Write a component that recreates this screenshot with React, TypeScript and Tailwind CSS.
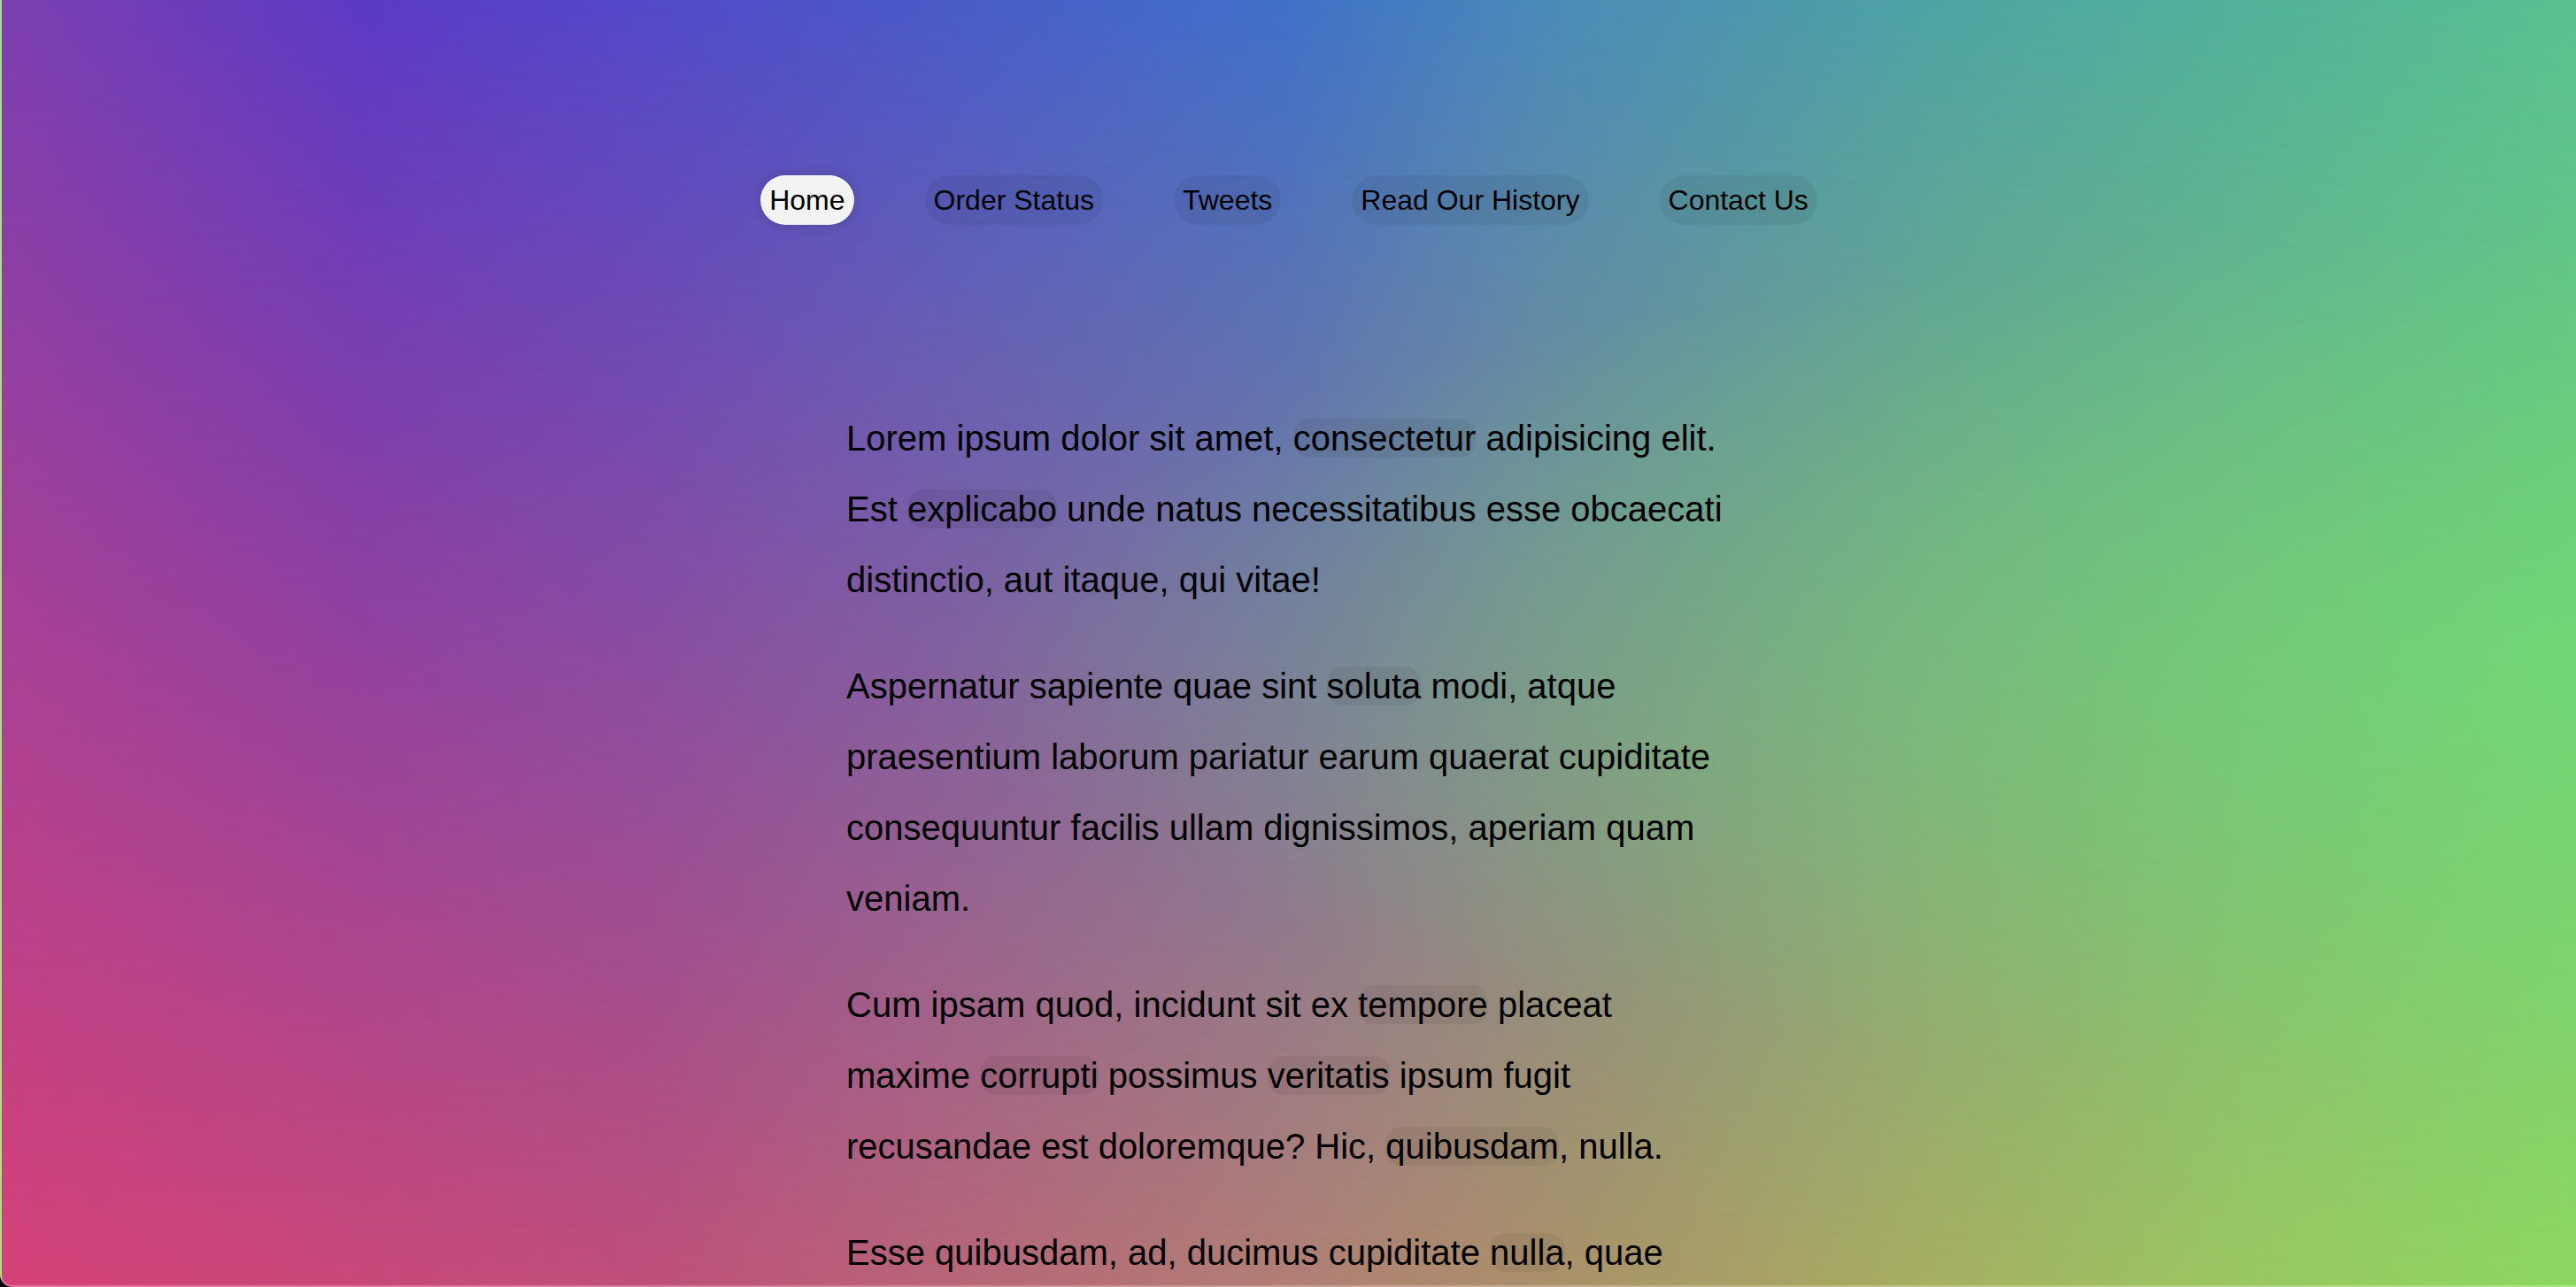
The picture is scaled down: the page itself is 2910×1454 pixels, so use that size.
import React from "react";

const links = ["Home", "Order Status", "Tweets", "Read Our History", "Contact Us"];

// a word with the soft pill behind it
function Hl({ children }: { children: React.ReactNode }) {
  return <span className="rounded-[18px] bg-black/[0.055]">{children}</span>;
}

export default function App() {
  return (
    <div className="h-[1454px] w-[2910px] overflow-hidden bg-black">
      <div className="grid h-full w-full overflow-hidden rounded-bl-[14px] border-b-2 border-l-2 border-white/25 bg-[linear-gradient(to_right,#d84277_0%,#c25078_25%,#b57f72_50%,#ad9566_62%,#a9b060_75%,#9cc860_87%,#8ed860_100%)] font-['Liberation_Sans',Arial,sans-serif] text-black">
        {/* top colours, fading out towards the bottom */}
        <div className="col-start-1 row-start-1 bg-[linear-gradient(to_right,#7b3fb0_0%,#5a3ac4_14%,#5249c8_25%,#3f70c8_50%,#4a8ab8_60%,#4da3a3_75%,#58c090_100%)] [mask-image:linear-gradient(to_bottom,black_0%,transparent_100%)]" />

        <div className="relative col-start-1 row-start-1 bg-[radial-gradient(ellipse_at_100%_50%,rgba(110,226,112,0.45)_0%,transparent_45%)] pt-[198px]">
          <nav className="flex justify-center gap-[80px]">
            {links.map((l, i) => (
              <a
                key={l}
                href="#"
                className={`flex h-[56px] items-center rounded-full px-[10px] text-[32px] ${
                  i === 0 ? "bg-[#f3f3f3] shadow-[0_0_14px_rgba(0,0,0,0.18)]" : "bg-black/[0.06]"
                }`}
              >
                {l}
              </a>
            ))}
          </nav>

          <main className="mx-auto mt-[201px] w-[1000px] text-[40px] leading-[80px]">
            <p className="mb-[40px]">
              Lorem ipsum dolor sit amet, <Hl>consectetur</Hl> adipisicing elit. Est <Hl>explicabo</Hl> unde natus
              necessitatibus esse obcaecati distinctio, aut itaque, qui vitae!
            </p>
            <p className="mb-[40px]">
              Aspernatur sapiente quae sint <Hl>soluta</Hl> modi, atque praesentium laborum pariatur earum quaerat
              cupiditate consequuntur facilis ullam dignissimos, aperiam quam veniam.
            </p>
            <p className="mb-[40px]">
              Cum ipsam quod, incidunt sit ex <Hl>tempore</Hl> placeat maxime <Hl>corrupti</Hl> possimus{" "}
              <Hl>veritatis</Hl> ipsum fugit recusandae est doloremque? Hic, <Hl>quibusdam</Hl>, nulla.
            </p>
            <p className="mb-[40px]">
              Esse quibusdam, ad, ducimus cupiditate <Hl>nulla</Hl>, quae
            </p>
          </main>
        </div>
      </div>
    </div>
  );
}
